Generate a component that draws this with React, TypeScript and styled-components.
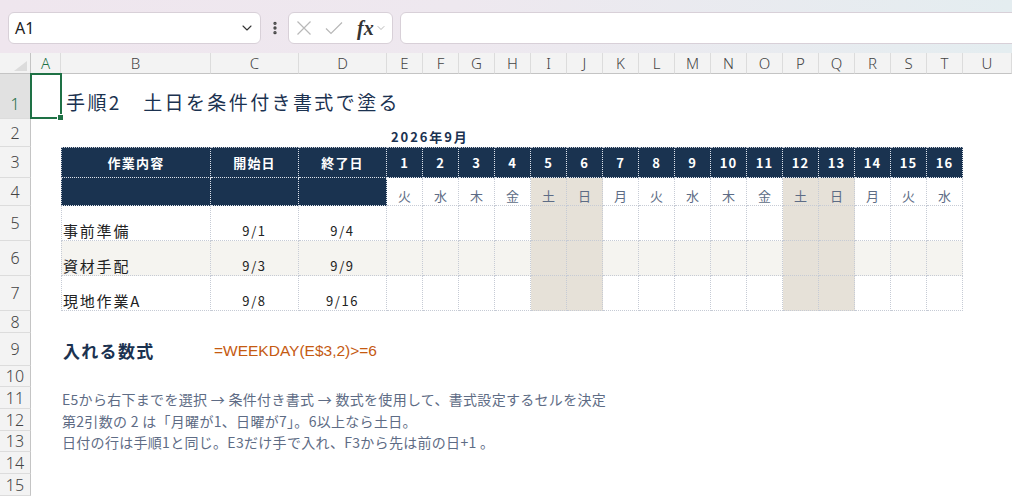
import styled, { createGlobalStyle, css } from "styled-components";
import { ChevronDown, EllipsisVertical } from "lucide-react";

const NAVY = "#1a3350";
const INK = "#1b3250";
const DOT = "#c6cbd5";
const GREEN = "#1e7145";
const WEEKEND = "#e6e1d8";
const STRIPE = "#f5f4f0";

const GlobalStyle = createGlobalStyle`
  html, body { margin: 0; padding: 0; background: #fff; }
  body {
    font-family: "Noto Sans CJK JP", "Noto Sans", sans-serif;
    overflow: hidden;
  }
`;

const Page = styled.div`
  width: 1012px;
  height: 497px;
  overflow: hidden;
  display: flex;
  flex-direction: column;
`;

/* ---------- formula toolbar ---------- */

const Toolbar = styled.div`
  height: 53px;
  flex: none;
  box-sizing: border-box;
  padding: 12px 0 0 8px;
  display: flex;
  align-items: flex-start;
  background: linear-gradient(90deg, #efe6ee 0%, #eee8ef 45%, #e4edf0 100%);
`;

const NameBox = styled.div`
  flex: none;
  width: 253px;
  height: 32px;
  box-sizing: border-box;
  background: #fff;
  border: 1px solid #d8d0d8;
  border-radius: 6px;
  display: flex;
  align-items: center;
  justify-content: space-between;
  padding: 0 5px 0 6px;
  font-family: "Noto Sans", sans-serif;
  font-size: 16px;
  color: #222;
`;

const Grip = styled.div`
  flex: none;
  width: 27px;
  height: 32px;
  display: flex;
  align-items: center;
  justify-content: center;
  color: #444;
`;

const FxGroup = styled.div`
  flex: none;
  width: 105px;
  height: 32px;
  box-sizing: border-box;
  background: #fff;
  border: 1px solid #d8d0d8;
  border-radius: 6px;
  display: flex;
  align-items: center;
  padding-left: 7px;
  gap: 13px;
  color: #b8b8b8;
`;

const FxLabel = styled.span`
  font-family: "Liberation Serif", serif;
  font-style: italic;
  font-weight: 700;
  font-size: 20px;
  color: #333;
  display: flex;
  align-items: center;
  gap: 1px;
  margin-left: 1px;
`;

const FormulaInput = styled.div`
  flex: none;
  width: 660px;
  height: 32px;
  margin-left: 7px;
  box-sizing: border-box;
  background: #fff;
  border: 1px solid #d8d0d8;
  border-radius: 6px;
`;

const CancelIcon = () => (
  <svg width="16" height="16" viewBox="0 0 16 16" fill="none" stroke="currentColor" strokeWidth="1.2">
    <path d="M1.5 1.5 14.5 14.5M14.5 1.5 1.5 14.5" />
  </svg>
);

const EnterIcon = () => (
  <svg width="18" height="14" viewBox="0 0 18 14" fill="none" stroke="currentColor" strokeWidth="1.2">
    <path d="M1 7.5 6 12.5 17 1.5" />
  </svg>
);

/* ---------- sheet grid ---------- */

const Sheet = styled.div`
  display: grid;
  grid-template-columns: 31px 30px 150px 88px 88px repeat(16, 36px) 1fr;
  grid-template-rows: 21px 45px 28px 31px 28px 35px 35px 35px 22px 33px 21px 22px 22px 21px 22px 22px;
`;

const Corner = styled.div`
  background: #f3f3f3;
  border-right: 1px solid #c4c4c4;
  border-bottom: 1px solid #c4c4c4;
  display: flex;
  align-items: flex-end;
  justify-content: flex-end;
  padding: 0 3px 2px 0;

  &::after {
    content: "";
    width: 0;
    height: 0;
    border-left: 13px solid transparent;
    border-bottom: 10px solid #dcdcdc;
  }
`;

const ColHead = styled.div<{ $active?: boolean }>`
  box-sizing: border-box;
  background: #f3f3f3;
  border-right: 1px solid #dcdcdc;
  border-bottom: 1px solid #c4c4c4;
  display: flex;
  align-items: center;
  justify-content: center;
  font-family: "Noto Sans", sans-serif;
  font-weight: 300;
  font-size: 15px;
  color: ${(p) => (p.$active ? GREEN : "#444")};
`;

const RowHead = styled.div<{ $active?: boolean }>`
  box-sizing: border-box;
  background: ${(p) => (p.$active ? "#e1e1e1" : "#f3f3f3")};
  border-right: 1px solid #c4c4c4;
  border-bottom: 1px solid #dcdcdc;
  display: flex;
  align-items: center;
  justify-content: center;
  font-family: "Noto Sans", sans-serif;
  font-weight: 300;
  font-size: 16px;
  padding-top: ${(p) => (p.$active ? "16px" : "0")};
  color: ${(p) => (p.$active ? GREEN : "#444")};
`;

const Blank = styled.div<{ $span?: number }>`
  grid-column: span ${(p) => p.$span ?? 1};
`;

const ActiveCell = styled.div`
  position: relative;

  &::before {
    content: "";
    position: absolute;
    inset: -1px -1px 0 -1px;
    border: 2px solid ${GREEN};
  }

  &::after {
    content: "";
    position: absolute;
    right: -3px;
    bottom: -2px;
    width: 5px;
    height: 5px;
    background: ${GREEN};
    border: 1px solid #fff;
  }
`;

const Title = styled.div`
  grid-column: span 20;
  display: flex;
  align-items: flex-end;
  padding: 0 0 4px 5px;
  font-size: 19px;
  letter-spacing: 2.4px;
  color: ${INK};
  white-space: nowrap;
`;

const Month = styled.div`
  grid-column: span 17;
  display: flex;
  align-items: flex-end;
  padding: 0 0 1px 4px;
  font-size: 13px;
  font-weight: 700;
  letter-spacing: 1.9px;
  color: ${INK};
  white-space: nowrap;
`;

type CellProps = {
  $bg?: string;
  $dark?: boolean;
  $first?: boolean;
  $top?: boolean;
  $align?: "center" | "flex-start";
  $valign?: "center" | "flex-end";
};

const TCell = styled.div<CellProps>`
  box-sizing: border-box;
  display: flex;
  justify-content: ${(p) => p.$align ?? "center"};
  align-items: ${(p) => p.$valign ?? "center"};
  background: ${(p) => p.$bg ?? (p.$dark ? NAVY : "#fff")};
  border-right: 1px dotted ${(p) => (p.$dark ? "#dfe4ec" : DOT)};
  border-bottom: 1px dotted ${(p) => (p.$dark ? "#dfe4ec" : DOT)};
  ${(p) =>
    p.$first &&
    css`
      border-left: 1px dotted ${DOT};
    `}
  ${(p) =>
    p.$top &&
    css`
      border-top: 1px dotted ${DOT};
    `}
  white-space: nowrap;
`;

const HeadText = styled.span`
  color: #fff;
  font-weight: 700;
  font-size: 13px;
  letter-spacing: 1.2px;
`;

const DayNum = styled.span`
  color: #fff;
  font-weight: 700;
  font-size: 13px;
  letter-spacing: 1px;
`;

const Weekday = styled.span`
  color: #5d6c85;
  font-size: 13px;
  line-height: 1.2;
  padding-bottom: 1px;
`;

const TaskText = styled.span`
  color: #222;
  font-size: 15px;
  line-height: 1.15;
  letter-spacing: 1.8px;
  padding: 0 0 1px 1px;
`;

const DateText = styled.span`
  color: #222;
  font-size: 13px;
  line-height: 1.15;
  letter-spacing: 1.6px;
  padding-bottom: 1px;
`;

const Label = styled.div`
  display: flex;
  align-items: center;
  padding: 1px 0 0 2px;
  font-size: 17px;
  font-weight: 700;
  letter-spacing: 1.3px;
  color: ${INK};
  white-space: nowrap;
`;

const Formula = styled.div`
  grid-column: span 19;
  display: flex;
  align-items: center;
  padding: 2px 0 0 3px;
  font-family: "Liberation Sans", sans-serif;
  font-size: 15.5px;
  color: #c55a11;
  white-space: nowrap;
`;

const Note = styled.div`
  grid-column: span 20;
  display: flex;
  align-items: center;
  padding: 1px 0 0 1px;
  font-size: 14px;
  letter-spacing: 0.3px;
  color: #5e6c85;
  white-space: pre;
`;

const COLUMNS = "ABCDEFGHIJKLMNOPQRSTU".split("");
const WEEKDAYS = ["火", "水", "木", "金", "土", "日", "月", "火", "水", "木", "金", "土", "日", "月", "火", "水"];
const DAYS = WEEKDAYS.map((w, i) => ({ day: i + 1, w, weekend: w === "土" || w === "日" }));

const TASKS = [
  { name: "事前準備", start: "9/1", end: "9/4" },
  { name: "資材手配", start: "9/3", end: "9/9" },
  { name: "現地作業A", start: "9/8", end: "9/16" },
];

const NOTES = [
  "E5から右下までを選択 → 条件付き書式 → 数式を使用して、書式設定するセルを決定",
  "第2引数の 2 は「月曜が1、日曜が7」。6以上なら土日。",
  "日付の行は手順1と同じ。E3だけ手で入れ、F3から先は前の日+1 。",
];

export default function App() {
  return (
    <Page>
      <GlobalStyle />
      <Toolbar>
        <NameBox>
          <span>A1</span>
          <ChevronDown size={16} strokeWidth={1.6} color="#333" />
        </NameBox>
        <Grip>
          <EllipsisVertical size={16} strokeWidth={3} />
        </Grip>
        <FxGroup>
          <CancelIcon />
          <EnterIcon />
          <FxLabel>
            fx
            <ChevronDown size={12} strokeWidth={1.4} color="#999" />
          </FxLabel>
        </FxGroup>
        <FormulaInput />
      </Toolbar>

      <Sheet>
        <Corner />
        {COLUMNS.map((c) => (
          <ColHead key={c} $active={c === "A"}>
            {c}
          </ColHead>
        ))}

        {/* row 1 */}
        <RowHead $active>1</RowHead>
        <ActiveCell />
        <Title>手順2　土日を条件付き書式で塗る</Title>

        {/* row 2 */}
        <RowHead>2</RowHead>
        <Blank $span={4} />
        <Month>2026年9月</Month>

        {/* row 3 */}
        <RowHead>3</RowHead>
        <Blank />
        <TCell $dark $first $top>
          <HeadText>作業内容</HeadText>
        </TCell>
        <TCell $dark $top>
          <HeadText>開始日</HeadText>
        </TCell>
        <TCell $dark $top>
          <HeadText>終了日</HeadText>
        </TCell>
        {DAYS.map((d) => (
          <TCell key={d.day} $dark $top>
            <DayNum>{d.day}</DayNum>
          </TCell>
        ))}
        <Blank />

        {/* row 4 */}
        <RowHead>4</RowHead>
        <Blank />
        <TCell $dark $first />
        <TCell $dark />
        <TCell $dark />
        {DAYS.map((d) => (
          <TCell key={d.day} $bg={d.weekend ? WEEKEND : "#fff"} $valign="flex-end">
            <Weekday>{d.w}</Weekday>
          </TCell>
        ))}
        <Blank />

        {/* rows 5-7 */}
        {TASKS.map((t, i) => {
          const bg = i === 1 ? STRIPE : "#fff";
          return [
            <RowHead key={`h${i}`}>{5 + i}</RowHead>,
            <Blank key={`a${i}`} />,
            <TCell key={`n${i}`} $first $bg={bg} $align="flex-start" $valign="flex-end">
              <TaskText>{t.name}</TaskText>
            </TCell>,
            <TCell key={`s${i}`} $bg={bg} $valign="flex-end">
              <DateText>{t.start}</DateText>
            </TCell>,
            <TCell key={`e${i}`} $bg={bg} $valign="flex-end">
              <DateText>{t.end}</DateText>
            </TCell>,
            ...DAYS.map((d) => <TCell key={`d${i}-${d.day}`} $bg={d.weekend ? WEEKEND : bg} />),
            <Blank key={`u${i}`} />,
          ];
        })}

        {/* row 8 */}
        <RowHead>8</RowHead>
        <Blank $span={21} />

        {/* row 9 */}
        <RowHead>9</RowHead>
        <Blank />
        <Label>入れる数式</Label>
        <Formula>=WEEKDAY(E$3,2)&gt;=6</Formula>

        {/* row 10 */}
        <RowHead>10</RowHead>
        <Blank $span={21} />

        {/* rows 11-13 */}
        {NOTES.map((n, i) => [
          <RowHead key={`nh${i}`}>{11 + i}</RowHead>,
          <Blank key={`na${i}`} />,
          <Note key={`nt${i}`}>{n}</Note>,
        ])}

        <RowHead>14</RowHead>
        <Blank $span={21} />
        <RowHead>15</RowHead>
        <Blank $span={21} />
      </Sheet>
    </Page>
  );
}
